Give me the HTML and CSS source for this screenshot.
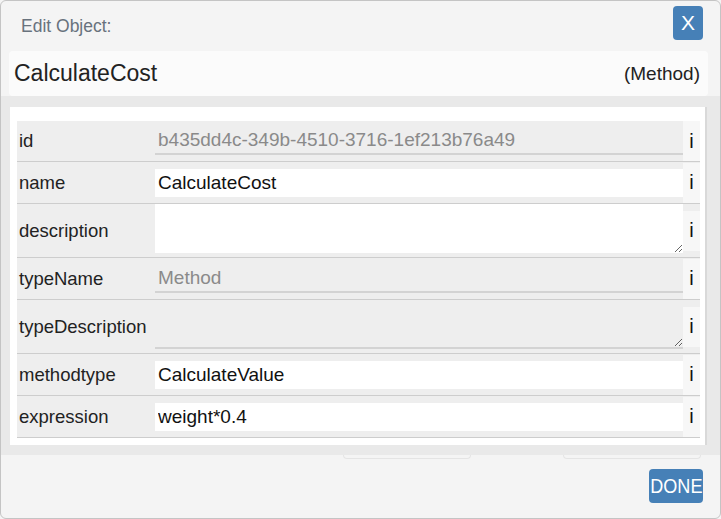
FILE: index.html
```html
<!DOCTYPE html>
<html lang="en">

<head>
  <meta charset="UTF-8">
  <title>Edit Object</title>
  <link rel="stylesheet" href="styles.css">
</head>

<body>
  <div class="dialog">
    <div class="header">
      <span class="header-title">Edit Object:</span>
      <button class="btn close">X</button>
    </div>

    <div class="title-bar">
      <span class="obj-name">CalculateCost</span>
      <span class="obj-type">(Method)</span>
    </div>

    <div class="band">
      <div class="panel">
        <div class="props">
          <div class="row row-short">
            <label class="key">id</label>
            <input class="val" type="text" value="b435dd4c-349b-4510-3716-1ef213b76a49" disabled>
            <span class="info">i</span>
          </div>
          <div class="row">
            <label class="key">name</label>
            <input class="val" type="text" value="CalculateCost">
            <span class="info">i</span>
          </div>
          <div class="row row-tall">
            <label class="key">description</label>
            <textarea class="val"></textarea>
            <span class="info">i</span>
          </div>
          <div class="row">
            <label class="key">typeName</label>
            <input class="val" type="text" value="Method" disabled>
            <span class="info">i</span>
          </div>
          <div class="row row-tall">
            <label class="key">typeDescription</label>
            <textarea class="val" disabled></textarea>
            <span class="info">i</span>
          </div>
          <div class="row">
            <label class="key">methodtype</label>
            <input class="val" type="text" value="CalculateValue">
            <span class="info">i</span>
          </div>
          <div class="row">
            <label class="key">expression</label>
            <input class="val" type="text" value="weight*0.4">
            <span class="info">i</span>
          </div>
        </div>
      </div>
    </div>

    <div class="footer">
      <div class="ghosts">
        <span class="ghost ghost-a"></span>
        <span class="ghost ghost-b"></span>
      </div>
      <div class="actions">
        <button class="btn done"><span class="done-text">DONE</span></button>
      </div>
    </div>
  </div>
</body>

</html>
```

FILE: styles.css
```css
html,
body {
  margin: 0;
  padding: 0;
  background: #f4f4f4;
  font-family: "Liberation Sans", Arial, sans-serif;
}

.dialog {
  box-sizing: border-box;
  width: 721px;
  height: 519px;
  display: flex;
  flex-direction: column;
  background: #f4f4f4;
  border: 1px solid #c4c4c4;
  border-radius: 6px;
  overflow: hidden;
}

.header {
  height: 50px;
  box-sizing: border-box;
  padding: 5px 17px 0 20px;
  display: flex;
  justify-content: space-between;
  align-items: flex-start;
}

.header-title {
  margin-top: 10px;
  font-size: 17.5px;
  color: #68727d;
}

.btn {
  color: #fff;
  background-color: #4680b7;
  border: none;
  border-radius: 4px;
  font-family: "Liberation Sans", Arial, sans-serif;
  cursor: pointer;
}

.close {
  width: 30px;
  height: 34px;
  padding: 0;
  font-size: 21px;
}

.title-bar {
  height: 45px;
  margin: 0 12px 0 8px;
  padding: 0 8px 0 5px;
  display: flex;
  justify-content: space-between;
  align-items: center;
  background: #fbfbfb;
  border-radius: 4px;
  color: #222;
}

.obj-name {
  font-size: 23px;
}

.obj-type {
  font-size: 19px;
}

.band {
  height: 359px;
  box-sizing: border-box;
  padding: 11px 13px 10px 9px;
  background: #e9e9e9;
}

.panel {
  height: 100%;
  box-sizing: border-box;
  padding: 14px 5px 7px 7px;
  background: #fff;
  border-right: 2px solid #d9d9d9;
}

.row {
  height: 41px;
  display: grid;
  grid-template-columns: 138px 528px 17px;
  align-items: center;
  background: #eeeeee;
  border-bottom: 1px solid #cdcdcd;
}

.row-short {
  height: 40px;
}

.row-tall {
  height: 53px;
}

.key {
  padding-left: 2px;
  font-size: 18.5px;
  color: #222;
}

.val {
  box-sizing: border-box;
  width: 100%;
  height: 28px;
  margin: 0;
  padding: 0 3px;
  background: #fff;
  border: none;
  border-radius: 0;
  font-family: "Liberation Sans", Arial, sans-serif;
  font-size: 19px;
  color: #111;
}

.val:focus {
  outline: none;
}

.val:disabled {
  background: transparent;
  border-bottom: 2px solid #d3d3d3;
  color: #8a8a8a;
}

textarea.val {
  align-self: start;
  height: 49px;
  resize: vertical;
}

.info {
  height: 40px;
  display: flex;
  justify-content: center;
  align-items: center;
  background: #f7f7f7;
  font-size: 20px;
  color: #111;
}

.footer {
  flex: 1;
  display: flex;
  flex-direction: column;
}

.ghosts {
  display: flex;
  height: 4px;
}

.ghost {
  box-sizing: border-box;
  height: 4px;
  border: 1px solid #e4e4e4;
  border-top: none;
  border-radius: 0 0 4px 4px;
}

.ghost-a {
  width: 128px;
  margin-left: 342px;
}

.ghost-b {
  width: 138px;
  margin-left: 92px;
}

.actions {
  display: flex;
  justify-content: flex-end;
  padding: 10px 17px 0 0;
}

.done {
  width: 54px;
  height: 34px;
  padding: 0;
  display: flex;
  justify-content: center;
  align-items: center;
}

.done-text {
  display: inline-block;
  margin: 0 -5px;
  font-size: 21px;
  transform: scaleX(0.86);
}
```
